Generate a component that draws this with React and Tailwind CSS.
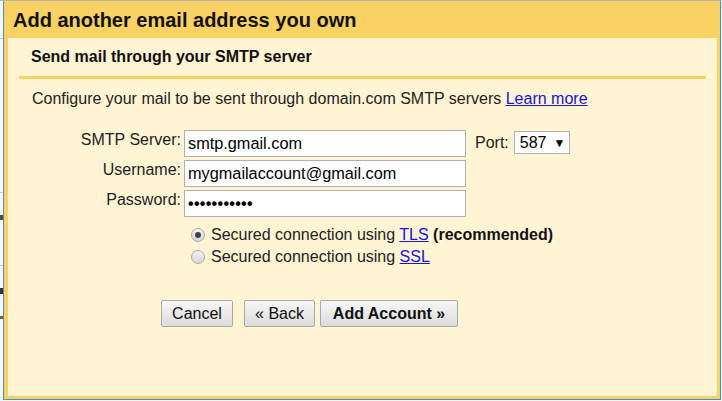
import React from 'react';

const font = { fontFamily: '"Liberation Sans", Arial, sans-serif' };

const Field = ({ label, children, extra }) => (
  <div className="flex items-start h-[30px]">
    <div className="w-[173px] text-right text-[16px] leading-[18px] pt-[1px] text-[#222]">{label}</div>
    <div className="ml-[3px] w-[282px] h-[27px] bg-white border border-[#b0b0b0] flex items-center pl-[3px] text-[16.3px] text-black">
      {children}
    </div>
    {extra}
  </div>
);

const Radio = ({ checked }) => (
  <div className="w-[14px] h-[14px] rounded-full border border-[#a8a8a8] bg-gradient-to-b from-[#f4f4f4] to-[#d8d8d8] flex items-center justify-center">
    {checked && <div className="w-[6px] h-[6px] rounded-full bg-[#444]"></div>}
  </div>
);

const Button = ({ children, bold, w }) => (
  <div
    className={`${w} h-[27px] border border-[#a9a9a9] rounded-[2px] bg-gradient-to-b from-[#f7f7f7] to-[#dcdcdc] flex items-center justify-center text-[16px] text-[#111] ${bold ? 'font-bold' : ''}`}
  >
    {children}
  </div>
);

export default function App() {
  return (
    <div className="w-[722px] h-[401px] overflow-hidden bg-[#f3f3f3] flex flex-col" style={font}>
      <div className="h-px bg-[#b3b3b3]"></div>
      <div className="flex h-[399px]">
        {/* page peeking out behind the dialog */}
        <div className="w-[3px] bg-[#f7f7f7] flex flex-col">
          <div className="h-[37px]"></div>
          <div className="h-px bg-[#c8c8c8]"></div>
          <div className="h-[153px]"></div>
          <div className="h-px bg-[#c8c8c8]"></div>
          <div className="h-[22px]"></div>
          <div className="h-[5px] bg-[#5a4a3a]"></div>
          <div className="h-[45px]"></div>
          <div className="h-px bg-[#c8c8c8]"></div>
          <div className="h-[22px]"></div>
          <div className="h-[6px] bg-[#333]"></div>
          <div className="h-[22px]"></div>
          <div className="h-[3px] bg-[#8a5a3a]"></div>
        </div>
        <div className="w-[718px] flex flex-col border-x border-b border-[#3d8fd9] bg-[#fad163]">
          <div className="h-[37px] flex items-center pl-[9px] pt-[1px]">
            <h1 className="text-[20px] font-bold text-[#111]">Add another email address you own</h1>
          </div>
          <div className="ml-[4px] mr-[3px] h-[358px] bg-[#fff4d4] flex flex-col">
            <div className="h-[38px] flex items-center pl-[23px]">
              <h2 className="text-[16px] font-bold text-[#111]">Send mail through your SMTP server</h2>
            </div>
            <div className="mx-[11px] h-[3px] bg-[#fad163]"></div>
            <div className="pl-[24px] mt-[11px] text-[16px] text-[#222] leading-[18px]">
              Configure your mail to be sent through domain.com SMTP servers{' '}
              <a className="text-[#1515d8] underline" href="#">Learn more</a>
            </div>
            <div className="mt-[22px] flex flex-col">
              <Field
                label="SMTP Server:"
                extra={
                  <div className="flex items-center ml-[9px] h-[25px]">
                    <span className="text-[16px] text-[#222]">Port:</span>
                    <div className="ml-[5px] w-[56px] h-[23px] bg-white border border-[#b0b0b0] flex items-center pl-[5px] text-[16px] text-black">
                      587
                      <span className="ml-[7px] text-[12px]">▼</span>
                    </div>
                  </div>
                }
              >
                smtp.gmail.com
              </Field>
              <Field label="Username:">mygmailaccount@gmail.com</Field>
              <Field label="Password:">
                <span className="text-[16px] font-bold tracking-[0.3px]">•••••••••••</span>
              </Field>
            </div>
            <div className="ml-[183px] mt-[4px] flex flex-col text-[16px] text-[#222]">
              <div className="flex items-center h-[22px]">
                <Radio checked />
                <span className="ml-[6px]">
                  Secured connection using <a className="text-[#1515d8] underline" href="#">TLS</a>{' '}
                  <b className="text-[#111]">(recommended)</b>
                </span>
              </div>
              <div className="flex items-center h-[22px]">
                <Radio />
                <span className="ml-[6px]">
                  Secured connection using <a className="text-[#1515d8] underline" href="#">SSL</a>
                </span>
              </div>
            </div>
            <div className="ml-[153px] mt-[32px] flex">
              <Button w="w-[72px]">Cancel</Button>
              <div className="ml-[11px]">
                <Button w="w-[71px]">« Back</Button>
              </div>
              <div className="ml-[5px]">
                <Button w="w-[138px]" bold>Add Account »</Button>
              </div>
            </div>
          </div>
        </div>
        <div className="w-px bg-[#f7f7f7]"></div>
      </div>
    </div>
  );
}
